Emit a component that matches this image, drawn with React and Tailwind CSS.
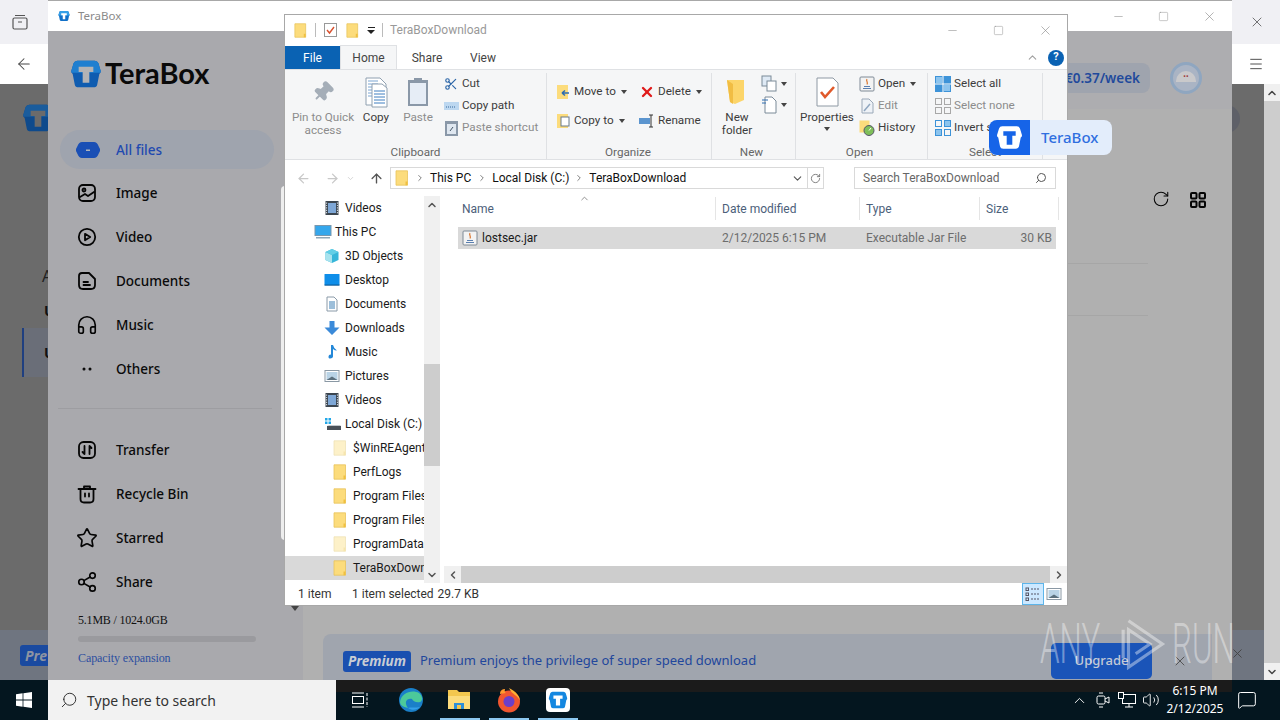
import { ArrowLeft, ArrowRight, ArrowUp, ChevronDown, ChevronUp, ChevronLeft, ChevronRight, Menu, X, Minus, Square, RotateCw, Search, Headphones, Star, Share2, Volume2, MessageSquare, Pin, Scissors } from 'lucide-react';

const ui = { fontFamily: '"Noto Sans", "Open Sans", sans-serif' };
const win = { fontFamily: 'Roboto, "Noto Sans", sans-serif' };

const BOX = 'M5.5 2H18.5Q20.6 2 21.3 4L23 9.5Q23.4 11 22 12L20.4 20Q20 22 17.5 22H6.5Q4 22 3.6 20L2 12Q.6 11 1 9.5L2.7 4Q3.4 2 5.5 2Z';
const TEE = 'M6.5 6.5H17.5V10.5H14.5V18.5H9.5V10.5H6.5Z';

const TeraMark = ({ size, body, tee, lid }) => (
  <svg width={size} height={size} viewBox="0 0 24 24">
    <path d={BOX} fill={body} />
    {lid && <path d="M5.5 2H18.5Q20.6 2 21.3 4L23 9.5Q23.2 10.4 22.7 11H1.3Q.8 10.4 1 9.5L2.7 4Q3.4 2 5.5 2Z" fill={lid} />}
    <path d={TEE} fill={tee} />
  </svg>
);

const Folder = ({ pale, size = 16 }) => (
  <svg width={size} height={size} viewBox="0 0 16 16" className="shrink-0">
    <path d="M2 .8H13.5V15.2H2Z" fill={pale ? '#fdf1c9' : '#fcdc7c'} stroke={pale ? '#efe2b6' : '#e8c35a'} strokeWidth=".8" />
    <path d="M11.5 11.5V15.2H13.5V11.5Z" fill={pale ? '#f6e5ae' : '#f0c040'} />
  </svg>
);

const VideoIco = () => (
  <svg width="16" height="16" viewBox="0 0 16 16"><rect x="1.5" y="1" width="13" height="14" fill="#3c4650" /><rect x="4" y="3" width="8" height="10" fill="#7ea7d6" /><path d="M2.5 2.5V14M13.5 2.5V14" stroke="#c8ced4" strokeWidth="1.2" strokeDasharray="1.2 1.2" /></svg>
);
const PcIco = () => (
  <svg width="18" height="16" viewBox="0 0 18 16"><rect x="1" y="1.5" width="16" height="10" fill="#35a7ec" stroke="#7a97ad" /><rect x="2" y="13" width="14" height="1.5" fill="#8fa7b8" /></svg>
);
const CubeIco = () => (
  <svg width="16" height="16" viewBox="0 0 16 16"><path d="M8 1L14.5 4V12L8 15L1.5 12V4Z" fill="#37b6d9" /><path d="M1.5 4L8 7V15L1.5 12Z" fill="#a8e3ee" /><path d="M8 1L14.5 4L8 7L1.5 4Z" fill="#63cfe6" /></svg>
);
const DesktopIco = () => (
  <svg width="16" height="16" viewBox="0 0 16 16"><rect x="0.5" y="2" width="15" height="11" rx=".5" fill="#0f8ee9" /><rect x="0.5" y="12.5" width="15" height="1.2" fill="#0a5c9c" /></svg>
);
const DocsIco = () => (
  <svg width="16" height="16" viewBox="0 0 16 16"><path d="M3 1H10L13 4V15H3Z" fill="#fff" stroke="#8a9aa8" /><path d="M5 6H11M5 8H11M5 10H11M5 12H11" stroke="#3b7fb5" /></svg>
);
const DownIco = () => (
  <svg width="16" height="16" viewBox="0 0 16 16"><path d="M5.5 1H10.5V7.5H15.5L8 15L.5 7.5H5.5Z" fill="#3b8ad9" /></svg>
);
const MusicIco = () => (
  <svg width="16" height="16" viewBox="0 0 16 16"><path d="M7 1H9Q10 5 13 6.5Q10.5 6.5 9 5V12.5C9 14.5 4.5 15.5 4.5 13S7 10.5 7 10.5Z" fill="#2488d8" /></svg>
);
const PicIco = () => (
  <svg width="16" height="16" viewBox="0 0 16 16"><rect x="1" y="2.5" width="14" height="11" fill="#fff" stroke="#8a98a4" /><rect x="2.5" y="4" width="11" height="8" fill="#b9d3e6" /><path d="M2.5 12L8 8.5L13.5 12Z" fill="#5b6f7d" /></svg>
);
const DiskIco = () => (
  <svg width="18" height="16" viewBox="0 0 18 16"><rect x="1" y="2" width="2.5" height="2.5" fill="#22a7e8" /><rect x="4.5" y="2" width="2.5" height="2.5" fill="#22a7e8" /><rect x="1" y="5.5" width="2.5" height="2.5" fill="#22a7e8" /><rect x="4.5" y="5.5" width="2.5" height="2.5" fill="#22a7e8" /><path d="M3 10H17V14H3Z" fill="#4a5058" /><path d="M5 9L16 9L17 10H3Z" fill="#c3c8cc" /></svg>
);
const JarIco = ({ size = 16 }) => (
  <svg width={size} height={size} viewBox="0 0 16 16" className="shrink-0"><rect x="1" y="1" width="14" height="14" rx="1" fill="#f3f3f3" stroke="#7f8a96" /><path d="M4 12.5H12M5 10.5H11" stroke="#5a7fb0" /><path d="M8 3C6.5 5 9.5 6 8 8.5" stroke="#d9752d" fill="none" strokeWidth="1.2" /></svg>
);

const treeRows = [
  ['Videos', 39, <VideoIco />],
  ['This PC', 29, <PcIco />],
  ['3D Objects', 39, <CubeIco />],
  ['Desktop', 39, <DesktopIco />],
  ['Documents', 39, <DocsIco />],
  ['Downloads', 39, <DownIco />],
  ['Music', 39, <MusicIco />],
  ['Pictures', 39, <PicIco />],
  ['Videos', 39, <VideoIco />],
  ['Local Disk (C:)', 39, <DiskIco />],
  ['$WinREAgent', 47, <Folder pale />],
  ['PerfLogs', 47, <Folder />],
  ['Program Files', 47, <Folder />],
  ['Program Files (x86)', 47, <Folder />],
  ['ProgramData', 47, <Folder pale />],
  ['TeraBoxDownload', 47, <Folder />, true],
];

const Line = ({ d, children, size = 22 }) => (
  <svg width={size} height={size} viewBox="0 0 22 22" fill="none" stroke="#050505" strokeWidth="1.8" strokeLinecap="round" strokeLinejoin="round">
    {d && <path d={d} />}
    {children}
  </svg>
);

const nav1 = [
  ['Image', <Line><rect x="3" y="3" width="16" height="16" rx="4" /><circle cx="8" cy="8" r="1.5" /><path d="M4 15L9 12L12 14L18 10" /></Line>],
  ['Video', <Line><circle cx="11" cy="11" r="8.2" /><path d="M9 7.8L14.2 11L9 14.2Z" /></Line>],
  ['Documents', <Line><path d="M6 3H13L19 9V15Q19 19 15 19H7Q3 19 3 15V6Q3 3 6 3Z" /><path d="M7.5 12H12M7.5 15H14" /></Line>],
  ['Music', <Headphones size={22} strokeWidth={1.8} color="#050505" />],
  ['Others', <Line><circle cx="8" cy="11" r=".6" /><circle cx="14" cy="11" r=".6" /></Line>],
];
const nav2 = [
  ['Transfer', <Line><rect x="3" y="3" width="16" height="16" rx="4.5" /><path d="M8.5 7V15M6.5 13L8.5 15M13.5 15V7M13.5 7L15.5 9" /></Line>],
  ['Recycle Bin', <Line><path d="M2.5 6H19.5M8 6V3.5H14V6M4.5 6V16Q4.5 19.5 8 19.5H14Q17.5 19.5 17.5 16V6M9 10.5V13.5M13 10.5V13.5" /></Line>],
  ['Starred', <Star size={22} strokeWidth={1.8} color="#050505" />],
  ['Share', <Share2 size={22} strokeWidth={1.8} color="#050505" />],
];

const NavRow = ({ icon, label }) => (
  <div className="flex h-11 items-center pl-[28px]">
    <span className="flex w-[40px] items-center text-black">{icon}</span>
    <span className="text-[13.5px] font-medium text-[#0a0a0a]">{label}</span>
  </div>
);

const BigBtn = ({ w, icon, lines, faded, caret }) => (
  <div className="flex flex-col items-center" style={{ width: w }}>
    <div className="flex h-[38px] items-center justify-center">{icon}</div>
    <div className={`whitespace-nowrap text-center text-[11.7px] leading-[13px] ${faded ? 'text-[#8c8c8c]' : 'text-[#3c3c3c]'}`}>
      {lines.map((l) => <div key={l}>{l}</div>)}
      {caret && <div className="mx-auto mt-[3px] h-0 w-0 border-x-[3px] border-t-[4px] border-x-transparent border-t-[#444]" />}
    </div>
  </div>
);

const SmallBtn = ({ icon, label, faded, caret }) => (
  <div className="flex h-[22px] items-center gap-[3px] whitespace-nowrap">
    <span className="flex w-[16px] shrink-0 justify-center">{icon}</span>
    <span className={`text-[11.7px] ${faded ? 'text-[#8c8c8c]' : 'text-[#3c3c3c]'}`}>{label}</span>
    {caret && <span className="ml-[2px] h-0 w-0 border-x-[3px] border-t-[4px] border-x-transparent border-t-[#444]" />}
  </div>
);

const Group = ({ w, label, children, shift = 0 }) => (
  <div className="flex h-full shrink-0 flex-col border-r border-[#dfe1e4]" style={{ width: w }}>
    <div className="flex h-[71px] shrink-0 items-start overflow-hidden">{children}</div>
    <div className="text-center text-[11.7px] leading-[16px] text-[#666]" style={{ paddingRight: shift }}>{label}</div>
  </div>
);

const PageIco = () => (
  <svg width="34" height="34" viewBox="0 0 34 34"><path d="M7 3H21L27 9V30H7Z" fill="#fff" stroke="#8fa0b0" /><path d="M9 6H19M9 9H19M9 12H24M9 15H24M9 18H24M9 21H24" stroke="#7aa5d2" /><path d="M13 9H23L28 13V32H13Z" fill="#fff" stroke="#8fa0b0" /><path d="M15 16H26M15 19H26M15 22H26M15 25H26M15 28H26" stroke="#3f7fc0" /></svg>
);

const Explorer = () => (
  <div className="absolute left-[284px] top-[14px] flex h-[592px] w-[784px] flex-col border border-[#a8a8a8] bg-white" style={win}>
    {/* title bar */}
    <div className="flex h-[30px] shrink-0 items-center pl-[8px]">
      <Folder size={15} />
      <span className="mx-[7px] h-[14px] w-px bg-[#bbb]" />
      <svg width="15" height="16" viewBox="0 0 15 16"><rect x="1.5" y="1.5" width="12" height="13" fill="#fff" stroke="#999" /><path d="M4 8L6.5 11L11 5" stroke="#d9502e" strokeWidth="1.4" fill="none" /></svg>
      <span className="ml-[7px]"><Folder size={15} /></span>
      <span className="ml-[7px] flex flex-col items-center gap-[2px]"><span className="h-px w-[7px] bg-[#222]" /><span className="h-0 w-0 border-x-[4px] border-t-[4px] border-x-transparent border-t-[#222]" /></span>
      <span className="mx-[7px] h-[14px] w-px bg-[#bbb]" />
      <span className="text-[12px] text-[#999]">TeraBoxDownload</span>
      <div className="ml-auto flex items-center gap-[34px] pr-[14px] text-[#888]">
        <Minus size={13} strokeWidth={1} />
        <Square size={11} strokeWidth={1} />
        <X size={15} strokeWidth={1} />
      </div>
    </div>
    {/* tabs */}
    <div className="flex h-[24px] shrink-0 items-end text-[12px] text-[#444]">
      <div className="flex h-[23px] w-[55px] items-center justify-center bg-[#0a62b3] text-white">File</div>
      <div className="flex h-[24px] w-[57px] items-center justify-center border-x border-t border-[#dfe1e4] bg-[#f5f6f7]">Home</div>
      <div className="flex h-[23px] w-[60px] items-center justify-center">Share</div>
      <div className="flex h-[23px] w-[52px] items-center justify-center">View</div>
      <div className="ml-auto flex h-[23px] items-center gap-[9px] pr-[3px]">
        <ChevronUp size={13} color="#a0a0a0" />
        <span className="flex h-[16px] w-[16px] items-center justify-center rounded-full bg-[#0a62b3] text-[11px] font-bold text-white">?</span>
      </div>
    </div>
    {/* ribbon */}
    <div className="flex h-[91px] shrink-0 border-y border-[#dfe1e4] bg-[#f5f6f7] pt-[3px]">
      <Group w={262} label="Clipboard">
        <div className="ml-[7px] flex">
          <BigBtn w={62} faded lines={['Pin to Quick', 'access']} icon={<Pin size={22} fill="#a5aeb8" color="#a5aeb8" className="rotate-45" />} />
          <BigBtn w={44} lines={['Copy']} icon={<PageIco />} />
          <BigBtn w={40} faded lines={['Paste']} icon={<svg width="22" height="30" viewBox="0 0 22 30"><rect x="1" y="3" width="20" height="26" fill="#8a98a8" /><rect x="3" y="6" width="16" height="21" fill="#e6edf6" /><rect x="7" y="1" width="8" height="4" fill="#8a98a8" /></svg>} />
        </div>
        <div className="ml-[5px] flex flex-col">
          <SmallBtn label="Cut" icon={<Scissors size={14} color="#2c66a8" />} />
          <SmallBtn label="Copy path" icon={<svg width="15" height="8" viewBox="0 0 15 8"><rect width="15" height="8" fill="#bcd7f0" /><path d="M2 5H12" stroke="#35689c" strokeDasharray="1 1" /></svg>} />
          <SmallBtn faded label="Paste shortcut" icon={<svg width="13" height="15" viewBox="0 0 13 15"><rect width="13" height="15" fill="#8a98a8" /><rect x="2" y="3" width="9" height="10" fill="#dfe7f0" /><path d="M5 10L8 6" stroke="#456" /></svg>} />
        </div>
      </Group>
      <Group w={165} label="Organize" shift={2}>
        <div className="ml-[8px] flex w-[77px] flex-col gap-[7px] pt-[8px]">
          <SmallBtn caret label="Move to" icon={<svg width="15" height="16" viewBox="0 0 15 16"><path d="M1 1H8L12 1V15H1Z" fill="#fcdc7c" /><path d="M13 9H6M6 9L9 6.5M6 9L9 11.5" stroke="#2d6cb0" strokeWidth="1.6" fill="none" /></svg>} />
          <SmallBtn caret label="Copy to" icon={<svg width="15" height="16" viewBox="0 0 15 16"><path d="M1 1H12V15H1Z" fill="#fcdc7c" /><rect x="5" y="4" width="8" height="9" fill="#fff" stroke="#6a7a88" /></svg>} />
        </div>
        <div className="ml-[7px] flex flex-col gap-[7px] pt-[8px]">
          <SmallBtn caret label="Delete" icon={<X size={16} strokeWidth={3.5} color="#e01a1a" />} />
          <SmallBtn label="Rename" icon={<svg width="16" height="14" viewBox="0 0 16 14"><rect y="4" width="11" height="6" fill="#5b95cf" /><path d="M12 1V13M10 1H14M10 13H14" stroke="#333" /></svg>} />
        </div>
      </Group>
      <Group w={84} label="New" shift={4}>
        <BigBtn w={50} lines={['New', 'folder']} icon={<svg width="24" height="30" viewBox="0 0 24 30"><path d="M2 3H19V23L10 27L5 25Z" fill="#fcd56a" /><path d="M2 3L8 7V27L5 25Z" fill="#f1bd43" /></svg>} />
        <div className="ml-[-1px] flex flex-col gap-[3px] pt-[2px]">
          <div className="flex items-center gap-[2px]"><svg width="18" height="18" viewBox="0 0 18 18"><rect x="1" y="1" width="9" height="10" fill="#dfeaf5" stroke="#7b8a98" /><rect x="6" y="6" width="9" height="10" fill="#fff" stroke="#7b8a98" /></svg><span className="h-0 w-0 border-x-[3px] border-t-[4px] border-x-transparent border-t-[#444]" /></div>
          <div className="flex items-center gap-[2px]"><svg width="18" height="18" viewBox="0 0 18 18"><path d="M4 1H11L15 5V17H4Z" fill="#fff" stroke="#7b8a98" /><path d="M1 4H7M1 7H5" stroke="#2d6cb0" /></svg><span className="h-0 w-0 border-x-[3px] border-t-[4px] border-x-transparent border-t-[#444]" /></div>
        </div>
      </Group>
      <Group w={132} label="Open" shift={4}>
        <BigBtn w={62} caret lines={['Properties']} icon={<svg width="26" height="30" viewBox="0 0 26 30"><path d="M3 1H19L24 6V29H3Z" fill="#fff" stroke="#8e99a4" /><path d="M7 15L11 20L20 10" stroke="#e0592a" strokeWidth="2.6" fill="none" /></svg>} />
        <div className="ml-[1px] flex flex-col">
          <SmallBtn caret label="Open" icon={<JarIco />} />
          <SmallBtn faded label="Edit" icon={<svg width="14" height="16" viewBox="0 0 14 16"><path d="M2 1H9L13 5V15H2Z" fill="#eef2f7" stroke="#9aa8b8" /><path d="M4 13L10 6" stroke="#8fa6c0" strokeWidth="1.5" /></svg>} />
          <SmallBtn label="History" icon={<svg width="16" height="16" viewBox="0 0 16 16"><rect x="0.5" y="0.5" width="10" height="12" fill="#fcdc7c" /><circle cx="10" cy="10.5" r="5" fill="#7fbf5a" stroke="#556" /><path d="M10 10.5L12 8" stroke="#fff" /></svg>} />
        </div>
      </Group>
      <Group w={115} label="Select">
        <div className="ml-[7px] flex flex-col">
          <SmallBtn label="Select all" icon={<svg width="16" height="16" viewBox="0 0 16 16"><rect width="16" height="16" fill="#3d93d8" /><path d="M8 0V16M0 8H16" stroke="#fff" /><rect x="1" y="1" width="6" height="6" fill="#8cc4ee" /><rect x="9" y="9" width="6" height="6" fill="#8cc4ee" /></svg>} />
          <SmallBtn faded label="Select none" icon={<svg width="16" height="16" viewBox="0 0 16 16" fill="none" stroke="#a8a8a8"><rect x=".5" y=".5" width="6" height="6" /><rect x="9.5" y=".5" width="6" height="6" /><rect x=".5" y="9.5" width="6" height="6" /><rect x="9.5" y="9.5" width="6" height="6" /></svg>} />
          <SmallBtn label="Invert selection" icon={<svg width="16" height="16" viewBox="0 0 16 16" stroke="#3d93d8"><rect x=".5" y=".5" width="6" height="6" fill="none" /><rect x="9.5" y=".5" width="6" height="6" fill="#8cc4ee" /><rect x=".5" y="9.5" width="6" height="6" fill="#8cc4ee" /><rect x="9.5" y="9.5" width="6" height="6" fill="none" /></svg>} />
        </div>
      </Group>
    </div>
    {/* address bar */}
    <div className="flex h-[36px] shrink-0 items-center pl-[11px]">
      <ArrowLeft size={15} color="#c8c8c8" />
      <ArrowRight size={15} color="#c8c8c8" className="ml-[14px]" />
      <ChevronDown size={9} color="#c8c8c8" className="ml-[6px]" />
      <ArrowUp size={15} color="#555" strokeWidth={2.2} className="ml-[14px]" />
      <div className="ml-[6px] flex h-[22px] w-[434px] items-center border border-[#d9d9d9] pl-[3px] text-[12px] text-[#111]">
        <Folder size={16} />
        <ChevronRight size={10} color="#666" className="ml-[5px]" />
        <span className="ml-[5px]">This PC</span>
        <ChevronRight size={10} color="#666" className="ml-[6px]" />
        <span className="ml-[5px]">Local Disk (C:)</span>
        <ChevronRight size={10} color="#666" className="ml-[5px]" />
        <span className="ml-[5px]">TeraBoxDownload</span>
        <ChevronDown size={13} color="#555" className="ml-auto" />
        <span className="ml-[3px] flex h-full w-[16px] items-center justify-center border-l border-[#d9d9d9]"><RotateCw size={11} color="#777" /></span>
      </div>
      <div className="ml-[30px] flex h-[22px] w-[202px] items-center justify-between border border-[#d9d9d9] px-[8px] text-[12px] text-[#666]">
        <span>Search TeraBoxDownload</span>
        <Search size={12} color="#555" className="scale-x-[-1]" />
      </div>
    </div>
    {/* panes */}
    <div className="flex min-h-0 flex-1">
      <div className="flex w-[155px] shrink-0">
        <div className="w-[139px] overflow-hidden">
          {treeRows.map(([label, pad, icon, sel], i) => (
            <div key={i} className={`flex h-[24px] items-center whitespace-nowrap text-[12px] text-[#1a1a1a] ${sel ? 'bg-[#d9d9d9]' : ''}`} style={{ paddingLeft: pad }}>
              <span className="flex w-[21px] shrink-0">{icon}</span>
              {label}
            </div>
          ))}
        </div>
        <div className="flex w-[16px] flex-col bg-[#f0f0f0]">
          <div className="flex h-[17px] items-center justify-center"><ChevronUp size={12} strokeWidth={3} color="#555" /></div>
          <div className="mt-[151px] h-[102px] bg-[#cdcdcd]" />
          <div className="mt-auto flex h-[17px] items-center justify-center"><ChevronDown size={12} strokeWidth={3} color="#555" /></div>
        </div>
      </div>
      <div className="relative flex min-w-0 flex-1 flex-col pl-[18px]">
        <div className="flex h-[24px] shrink-0 items-center pt-[1px] text-[12px] text-[#4c607a]">
          <div className="w-[257px] pl-[4px]">Name</div>
          <div className="h-full w-[144px] border-l border-[#e5e5e5] pl-[6px] leading-[24px]">Date modified</div>
          <div className="h-full w-[120px] border-l border-[#e5e5e5] pl-[6px] leading-[24px]">Type</div>
          <div className="h-full w-[80px] border-x border-[#e5e5e5] pl-[6px] leading-[24px]">Size</div>
        </div>
        <ChevronUp size={11} color="#888" className="absolute left-[139px] top-[-3px]" />
        <div className="mt-[7px] flex h-[22px] w-[598px] items-center bg-[#d9d9d9] text-[12px]">
          <div className="flex w-[257px] items-center gap-[4px] pl-[4px] text-[#1a1a1a]"><JarIco />lostsec.jar</div>
          <div className="w-[144px] pl-[7px] text-[#6d6d6d]">2/12/2025 6:15 PM</div>
          <div className="w-[120px] pl-[7px] text-[#6d6d6d]">Executable Jar File</div>
          <div className="w-[77px] pr-[4px] text-right text-[#6d6d6d]">30 KB</div>
        </div>
        <div className="mt-auto ml-[-14px] flex h-[17px] items-center bg-[#f0f0f0]">
          <span className="flex w-[17px] justify-center"><ChevronLeft size={12} strokeWidth={3} color="#555" /></span>
          <span className="h-full flex-1 bg-[#cdcdcd]" />
          <span className="flex w-[17px] justify-center"><ChevronRight size={12} strokeWidth={3} color="#555" /></span>
        </div>
      </div>
    </div>
    {/* status bar */}
    <div className="flex h-[22px] shrink-0 items-center pl-[13px] text-[12px] text-[#333]">
      <span className="w-[54px]">1 item</span>
      <span>1 item selected</span>
      <span className="ml-[4px]">29.7 KB</span>
      <div className="ml-auto flex items-center pr-[5px]">
        <span className="flex h-[22px] w-[22px] items-center justify-center border border-[#5db5ea] bg-[#cce8ff]">
          <svg width="16" height="14" viewBox="0 0 16 14" stroke="#556"><path d="M6 2H15M6 7H15M6 12H15" strokeDasharray="2 1" /><rect x="1" y="1" width="2.5" height="2.5" fill="none" /><rect x="1" y="6" width="2.5" height="2.5" fill="none" /><rect x="1" y="11" width="2.5" height="2.5" fill="none" /></svg>
        </span>
        <span className="ml-[2px] flex w-[16px] justify-center"><PicIco /></span>
      </div>
    </div>
  </div>
);

const Sidebar = () => (
  <div className="relative flex w-[255px] shrink-0 flex-col bg-[#a9a9ad]">
    <div className="flex h-[84px] items-start pl-[22px] pt-[27px]">
      <TeraMark size={32} body="#0f5cb0" lid="#1f7fd0" tee="#b3b3b5" />
      <span className="ml-[3px] text-[29px] font-bold leading-[30px] text-[#0a0a0a]" style={{ fontFamily: 'Lato, sans-serif' }}>TeraBox</span>
    </div>
    <div className="mx-[12px] mt-[15px] flex h-[39px] w-[214px] items-center rounded-[20px] bg-[#9fa4ae] pl-[16px]">
      <svg width="24" height="16" viewBox="0 0 24 16" className="mr-[16px]"><path d="M6 0H18Q21 0 22.5 4L24 7V9L22.5 12Q21 16 18 16H6Q3 16 1.5 12L0 9V7L1.5 4Q3 0 6 0Z" fill="#1a4fb5" /><rect x="10" y="7.5" width="4" height="1.5" fill="#b0b4bc" /></svg>
      <span className="pt-[1px] text-[13.5px] font-medium text-[#1f4ab0]">All files</span>
    </div>
    <div className="mt-[2px]">
      {nav1.map(([l, i]) => <NavRow key={l} label={l} icon={i} />)}
    </div>
    <div className="mx-[10px] mt-[17px] h-px w-[214px] bg-[#9d9da1]" />
    <div className="mt-[19px]">
      {nav2.map(([l, i]) => <NavRow key={l} label={l} icon={i} />)}
    </div>
    <div className="ml-[30px] mt-[9px] text-[12px] leading-[14px] tracking-[-0.2px] text-[#111]" style={{ fontFamily: '"Liberation Serif", serif' }}>5.1MB / 1024.0GB</div>
    <div className="ml-[30px] mt-[9px] h-[6px] w-[178px] rounded bg-[#9a9a9e]" />
    <div className="ml-[30px] mt-[9px] text-[12px] leading-[14px] tracking-[-0.1px] text-[#2c4fa0]" style={{ fontFamily: '"Liberation Serif", serif' }}>Capacity expansion</div>
    <span className="absolute left-[243px] top-[575px] h-0 w-0 border-x-[4px] border-t-[5px] border-x-transparent border-t-[#444]" />
  </div>
);

const TeraWindow = () => (
  <div className="absolute left-[48px] top-0 flex h-[680px] w-[1184px] flex-col border-t border-[#a8a8a8]" style={ui}>
    <div className="flex h-[30px] shrink-0 items-center bg-white pl-[10px]">
      <TeraMark size={12} body="#1170c8" lid="#35a0e8" tee="#fff" />
      <span className="ml-[8px] text-[11.5px] text-[#8a8a8a]">TeraBox</span>
      <div className="ml-auto flex items-center gap-[33px] pr-[15px] text-[#888]">
        <Minus size={13} strokeWidth={1} />
        <Square size={11} strokeWidth={1} />
        <X size={15} strokeWidth={1} />
      </div>
    </div>
    <div className="flex min-h-0 flex-1">
      <Sidebar />
      <div className="relative flex min-w-0 flex-1 flex-col bg-[#b0b0b0]">
        <div className="flex h-[78px] shrink-0 items-center justify-end bg-[#adadb0] pr-[30px] pt-[16px]">
          <div className="flex h-[30px] w-[92px] items-center justify-end rounded-[8px] bg-[#9fa4ae] pr-[10px] text-[13.5px] font-semibold text-[#1f4a9c]">€0.37/week</div>
          <div className="relative ml-[20px] h-[32px] w-[32px] overflow-hidden rounded-full border-[3px] border-[#8fa6c0] bg-[#aab4c4]">
            <span className="absolute left-[3px] top-[6px] flex h-[11px] w-[20px] items-center justify-center rounded-t-full bg-[#c9c9cb] text-[7px] leading-none text-[#a04040]">••</span>
          </div>
        </div>
        <div className="flex h-[101px] shrink-0 items-end justify-end gap-[20px] pr-[26px] pb-[2px]">
          <RotateCw size={18} color="#050505" strokeWidth={1.4} />
          <svg width="16" height="16" viewBox="0 0 16 16" fill="none" stroke="#050505" strokeWidth="2"><rect x="1" y="1" width="5.5" height="5.5" rx="1" /><rect x="9.5" y="1" width="5.5" height="5.5" rx="1" /><rect x="1" y="9.5" width="5.5" height="5.5" rx="1" /><rect x="9.5" y="9.5" width="5.5" height="5.5" rx="1" /></svg>
        </div>
        <div className="mr-[84px] mt-[53px] h-px bg-[#a6a6a6]" />
        <div className="mr-[84px] mt-[51px] h-px bg-[#a6a6a6]" />
        <div className="mt-auto ml-[20px] mr-[20px] flex h-[46px] shrink-0 items-center rounded-tl-[8px] bg-[#a0a5ae] pl-[20px] pt-[8px]">
          <span className="flex h-[21px] w-[68px] items-center justify-center rounded-[3px] bg-[#1a50b0] text-[13.5px] font-bold italic text-[#c9cdd4]">Premium</span>
          <span className="ml-[9px] text-[13px] text-[#22479c]">Premium enjoys the privilege of super speed download</span>
          <span className="ml-auto flex h-[36px] w-[101px] items-center justify-center rounded-[5px] bg-[#1a54b8] text-[13px] font-medium text-[#c4cad6]">Upgrade</span>
          <X size={16} color="#555" className="ml-[20px] mr-[24px]" strokeWidth={1.5} />
        </div>
      </div>
    </div>
  </div>
);

const BrowserBehind = () => (
  <div className="absolute inset-0 flex flex-col" style={ui}>
    <div className="flex h-[44px] shrink-0 items-center justify-between bg-[#f0f0f4] pl-[12px] pr-[15px]">
      <svg width="16" height="16" viewBox="0 0 16 16" fill="none" stroke="#555" strokeWidth="1.2"><rect x="1" y="4" width="14" height="11" rx="1.5" /><path d="M3 1.5H13M6 8H10" /></svg>
      <X size={16} strokeWidth={1} color="#333" />
    </div>
    <div className="flex h-[40px] shrink-0 items-center justify-between bg-white pl-[15px] pr-[16px]">
      <ArrowLeft size={18} strokeWidth={1.4} color="#444" />
      <Menu size={16} strokeWidth={1.4} color="#444" />
    </div>
    <div className="flex min-h-0 flex-1">
      <div className="relative flex-1 bg-[#6b6b6b]">
        <div className="absolute left-[22px] top-[18px]"><TeraMark size={32} body="#0e4a8c" lid="#1a5c9c" tee="#6b6b6b" /></div>
        <div className="absolute left-[42px] top-[180px] text-[16px] text-[#222]">A</div>
        <div className="absolute left-[44px] top-[216px] text-[14px] font-bold text-[#111]">U</div>
        <div className="absolute left-[22px] top-[244px] flex h-[49px] w-[30px] items-center border-l-2 border-[#1f3f80] bg-[#6a6e78] pl-[20px] text-[14px] font-bold text-[#111]">U</div>
        {/* avatar of the page behind, peeking past the window edge */}
        <div className="absolute left-[1212px] top-[21px] h-[28px] w-[28px] rounded-full bg-[#5e6068]" />
        <div className="absolute bottom-0 left-0 flex h-[50px] w-full items-center bg-[#6f7580] pl-[20px]">
          <span className="h-[21px] w-[40px] overflow-hidden rounded-[3px] bg-[#1a4aa0] pl-[5px] text-[14px] font-bold italic leading-[21px] text-[#8d94a2]">Pre</span>
          <X size={15} strokeWidth={1.5} color="#444" className="absolute left-[1230px] top-[16px]" />
        </div>
      </div>
      <div className="flex w-[16px] shrink-0 flex-col justify-between bg-[#cdcdcd]">
        <div className="flex h-[17px] items-center justify-center bg-[#f0f0f0]"><ChevronUp size={12} strokeWidth={3} color="#444" /></div>
        <div className="flex h-[17px] items-center justify-center bg-[#f0f0f0]"><ChevronDown size={12} strokeWidth={3} color="#444" /></div>
      </div>
    </div>
    <div className="h-[40px] shrink-0" />
  </div>
);

const Taskbar = () => (
  <div className="absolute bottom-0 left-0 flex h-[40px] w-[1280px] items-center bg-[#04161f]" style={ui}>
    <div className="absolute left-[336px] top-0 h-[12px] w-[896px] bg-[#1b1b1b]" />
    <div className="flex w-[48px] justify-center">
      <svg width="16" height="16" viewBox="0 0 16 16" fill="#fff"><path d="M0 2.2L6.6 1.3V7.6H0ZM7.4 1.2L16 0V7.6H7.4ZM0 8.4H6.6V14.7L0 13.8ZM7.4 8.4H16V16L7.4 14.8Z" /></svg>
    </div>
    <div className="flex h-full w-[288px] items-center bg-[#f2f2f2] pl-[12px]">
      <Search size={18} strokeWidth={1.2} color="#222" className="scale-x-[-1]" />
      <span className="ml-[9px] text-[14px] text-[#333]">Type here to search</span>
    </div>
    <div className="relative flex h-full flex-1">
      <span className="absolute left-[16px] top-[12px]"><svg width="16" height="16" viewBox="0 0 16 16" fill="none" stroke="#fff"><path d="M0 1H12M0 15H12" /><rect x=".5" y="4.5" width="11" height="7" /><path d="M15 1V15" strokeDasharray="3 1.5" /></svg></span>
      <span className="absolute left-[62px] top-[7px]">
        <svg width="26" height="26" viewBox="0 0 26 26"><circle cx="13" cy="13" r="12" fill="#1a7fc8" /><path d="M2 15C3 6 14 2 21 6C25 9 25 14 22 15C18 16 15 14 14 12C8 11 6 16 10 21C5 20 2 18 2 15Z" fill="#4cc99a" /><path d="M10 21C14 24 19 23 22 20C18 21 12 20 10 21Z" fill="#35a0e8" /></svg>
      </span>
      <span className="absolute left-[111px] top-[8px]">
        <svg width="24" height="22" viewBox="0 0 24 22"><path d="M1 2H10L12 4H23V21H1Z" fill="#f3c74e" /><rect x="1" y="8" width="22" height="13" fill="#fcdc7c" /><rect x="7" y="15" width="10" height="6" fill="#2d8fd8" /><rect x="10" y="17" width="4" height="4" fill="#f3c74e" /></svg>
      </span>
      <span className="absolute left-[161px] top-[7px]">
        <svg width="24" height="26" viewBox="0 0 24 26"><circle cx="12" cy="14.5" r="11" fill="#f0562f" /><path d="M12 1C18 4 23 9 23 14C21 8 15 8 12 1Z" fill="#fbb034" /><circle cx="12" cy="14.5" r="5.5" fill="#6b3fc9" /><path d="M3 7C3 3 6 2 8 2C7 5 9 6 9 6Z" fill="#ff9a2e" /></svg>
      </span>
      <span className="absolute left-[210px] top-[8px] flex h-[24px] w-[24px] items-center justify-center rounded-[4px] bg-white">
        <TeraMark size={20} body="#1487e0" tee="#fff" />
      </span>
      <span className="absolute bottom-0 left-[104px] h-[2px] w-[40px] bg-[#8cc8f0]" />
      <span className="absolute bottom-0 left-[153px] h-[2px] w-[40px] bg-[#8cc8f0]" />
      <span className="absolute bottom-0 left-[202px] h-[2px] w-[40px] bg-[#8cc8f0]" />
    </div>
    <div className="relative flex h-full items-center text-white">
      <ChevronUp size={17} strokeWidth={1.3} className="mr-[7px]" />
      <svg width="16" height="16" viewBox="0 0 16 16" fill="none" stroke="#fff" className="mr-[7px]"><rect x="2" y="4" width="8" height="8" rx="1.5" /><path d="M10 7L14 5V11L10 9M4 1H8M4 15H8" /></svg>
      <svg width="18" height="16" viewBox="0 0 18 16" fill="none" stroke="#fff" className="mr-[6px]"><rect x="4.5" y="2.5" width="13" height="9" /><rect x=".5" y=".5" width="5" height="6" fill="#04161f" /><path d="M11 12V15M7 15H15" /></svg>
      <Volume2 size={18} strokeWidth={1.2} className="mr-[4px]" />
      <div className="flex w-[62px] flex-col items-center text-[12px] leading-[18px]">
        <span>6:15 PM</span>
        <span>2/12/2025</span>
      </div>
      <MessageSquare size={20} strokeWidth={1.2} className="ml-[11px] mr-[23px]" />
    </div>
  </div>
);

export default function App() {
  return (
    <div className="relative h-[720px] w-[1280px] overflow-hidden bg-[#04161f]">
      <BrowserBehind />
      <TeraWindow />
      <div className="absolute left-[281px] top-[186px] h-[354px] w-[4px] rounded-l bg-[#eeeeee]" />
      <Explorer />
      {/* TeraBox drag badge */}
      <div className="absolute left-[989px] top-[120px] flex h-[35px] w-[123px] items-center overflow-hidden rounded-[8px] bg-[#e3edfb]" style={ui}>
        <span className="flex h-full w-[41px] items-center justify-center bg-[#1664e8]"><TeraMark size={27} body="#fff" tee="#1664e8" /></span>
        <span className="ml-[11px] text-[15px] font-medium text-[#2f6fe0]">TeraBox</span>
      </div>
      <Taskbar />
      {/* watermark */}
      <div className="pointer-events-none absolute left-[1040px] top-[616px] flex h-[56px] w-[196px] items-center text-white/40" style={{ fontFamily: 'Roboto, sans-serif' }}>
        <span className="w-[62px] origin-left scale-x-[0.56] whitespace-nowrap text-[56px] font-light leading-none">ANY</span>
        <svg width="50" height="54" viewBox="0 0 56 56" fill="none" stroke="currentColor" strokeWidth="3.5" className="ml-[14px]"><path d="M8 12V44M14 2L52 28L14 54V12L38 28L22 39" /></svg>
        <span className="ml-[6px] w-[60px] origin-left scale-x-[0.56] whitespace-nowrap text-[56px] font-light leading-none">RUN</span>
      </div>
    </div>
  );
}
